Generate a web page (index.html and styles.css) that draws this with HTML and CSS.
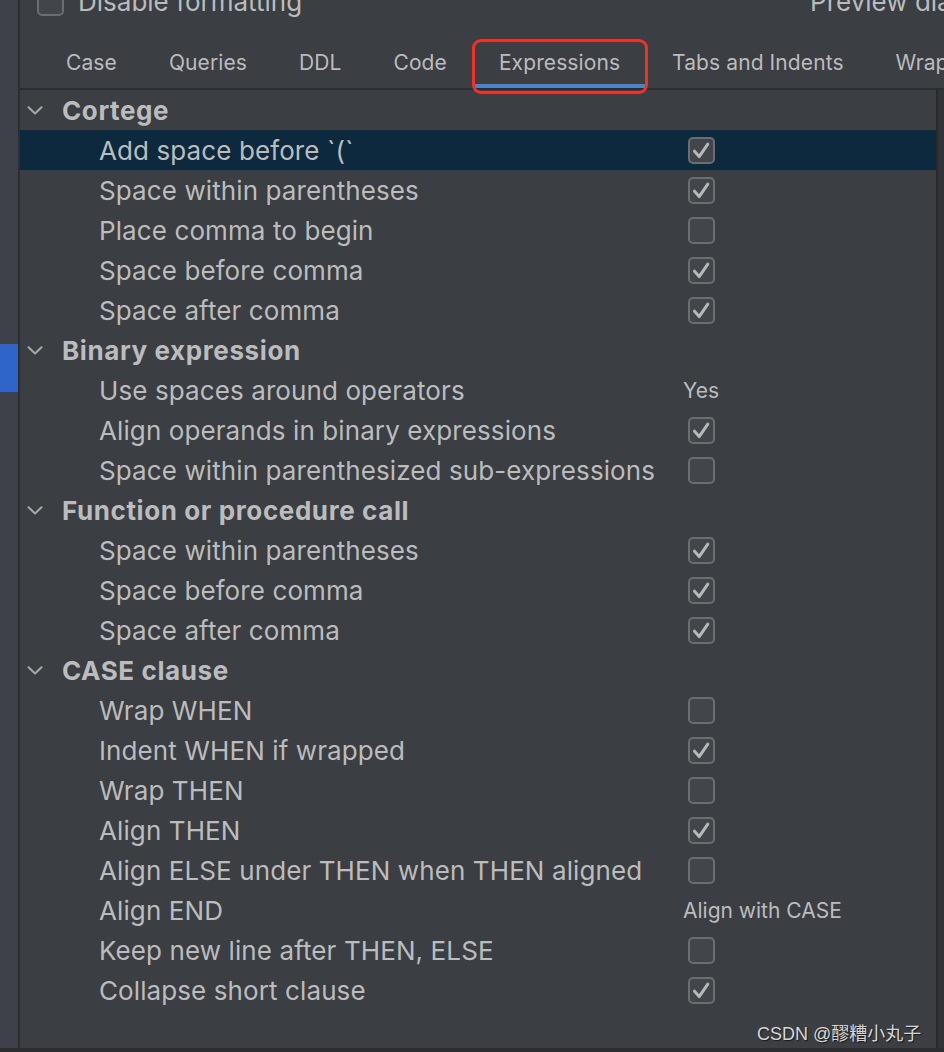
FILE: index.html
```html
<!DOCTYPE html>
<html lang="en">
<head>
<meta charset="utf-8">
<title>Code Style - Expressions</title>
<link rel="stylesheet" href="styles.css">
</head>
<body>
<div class="app">
  <aside class="sidebar"><div class="sidebar-mark"></div></aside>
  <main class="main">
    <div class="topbar">
      <span class="cb top-cb"></span>
      <span class="top-label">Disable formatting</span>
      <span class="top-right">Preview dialect:</span>
    </div>
    <nav class="tabs">
      <span class="tab">Case</span>
      <span class="tab">Queries</span>
      <span class="tab">DDL</span>
      <span class="tab">Code</span>
      <span class="tab active">Expressions<span class="annot"></span></span>
      <span class="tab">Tabs and Indents</span>
      <span class="tab">Wrapping and Braces</span>
    </nav>
    <div class="body">
      <div class="list">
        <div class="row header"><span class="chev"><svg viewBox="0 0 16 9" width="16" height="9"><path d="M1.5 1.2 L8 7.5 L14.5 1.2"/></svg></span><span class="hlabel">Cortege</span></div>
        <div class="row item selected"><span class="label">Add space before `(`</span><span class="val"><span class="cb on"><svg viewBox="0 0 27 27"><path d="M6.5 14.2 L11.2 19.6 L19.8 7.2"/></svg></span></span></div>
        <div class="row item"><span class="label">Space within parentheses</span><span class="val"><span class="cb on"><svg viewBox="0 0 27 27"><path d="M6.5 14.2 L11.2 19.6 L19.8 7.2"/></svg></span></span></div>
        <div class="row item"><span class="label">Place comma to begin</span><span class="val"><span class="cb"></span></span></div>
        <div class="row item"><span class="label">Space before comma</span><span class="val"><span class="cb on"><svg viewBox="0 0 27 27"><path d="M6.5 14.2 L11.2 19.6 L19.8 7.2"/></svg></span></span></div>
        <div class="row item"><span class="label">Space after comma</span><span class="val"><span class="cb on"><svg viewBox="0 0 27 27"><path d="M6.5 14.2 L11.2 19.6 L19.8 7.2"/></svg></span></span></div>

        <div class="row header"><span class="chev"><svg viewBox="0 0 16 9" width="16" height="9"><path d="M1.5 1.2 L8 7.5 L14.5 1.2"/></svg></span><span class="hlabel">Binary expression</span></div>
        <div class="row item"><span class="label">Use spaces around operators</span><span class="val"><span class="txt">Yes</span></span></div>
        <div class="row item"><span class="label">Align operands in binary expressions</span><span class="val"><span class="cb on"><svg viewBox="0 0 27 27"><path d="M6.5 14.2 L11.2 19.6 L19.8 7.2"/></svg></span></span></div>
        <div class="row item"><span class="label">Space within parenthesized sub-expressions</span><span class="val"><span class="cb"></span></span></div>

        <div class="row header"><span class="chev"><svg viewBox="0 0 16 9" width="16" height="9"><path d="M1.5 1.2 L8 7.5 L14.5 1.2"/></svg></span><span class="hlabel">Function or procedure call</span></div>
        <div class="row item"><span class="label">Space within parentheses</span><span class="val"><span class="cb on"><svg viewBox="0 0 27 27"><path d="M6.5 14.2 L11.2 19.6 L19.8 7.2"/></svg></span></span></div>
        <div class="row item"><span class="label">Space before comma</span><span class="val"><span class="cb on"><svg viewBox="0 0 27 27"><path d="M6.5 14.2 L11.2 19.6 L19.8 7.2"/></svg></span></span></div>
        <div class="row item"><span class="label">Space after comma</span><span class="val"><span class="cb on"><svg viewBox="0 0 27 27"><path d="M6.5 14.2 L11.2 19.6 L19.8 7.2"/></svg></span></span></div>

        <div class="row header"><span class="chev"><svg viewBox="0 0 16 9" width="16" height="9"><path d="M1.5 1.2 L8 7.5 L14.5 1.2"/></svg></span><span class="hlabel">CASE clause</span></div>
        <div class="row item"><span class="label">Wrap WHEN</span><span class="val"><span class="cb"></span></span></div>
        <div class="row item"><span class="label">Indent WHEN if wrapped</span><span class="val"><span class="cb on"><svg viewBox="0 0 27 27"><path d="M6.5 14.2 L11.2 19.6 L19.8 7.2"/></svg></span></span></div>
        <div class="row item"><span class="label">Wrap THEN</span><span class="val"><span class="cb"></span></span></div>
        <div class="row item"><span class="label">Align THEN</span><span class="val"><span class="cb on"><svg viewBox="0 0 27 27"><path d="M6.5 14.2 L11.2 19.6 L19.8 7.2"/></svg></span></span></div>
        <div class="row item"><span class="label">Align ELSE under THEN when THEN aligned</span><span class="val"><span class="cb"></span></span></div>
        <div class="row item"><span class="label">Align END</span><span class="val"><span class="txt">Align with CASE</span></span></div>
        <div class="row item"><span class="label">Keep new line after THEN, ELSE</span><span class="val"><span class="cb"></span></span></div>
        <div class="row item"><span class="label">Collapse short clause</span><span class="val"><span class="cb on"><svg viewBox="0 0 27 27"><path d="M6.5 14.2 L11.2 19.6 L19.8 7.2"/></svg></span></span></div>
      </div>
      <div class="gutter"></div>
    </div>
  </main>
</div>
<div class="watermark">CSDN @醪糟小丸子</div>
</body>
</html>
```

FILE: styles.css
```css
* { box-sizing: border-box; }

html, body {
  margin: 0;
  padding: 0;
}

body {
  width: 944px;
  height: 1052px;
  overflow: hidden;
  background: #2b2d30;
  font-family: Inter, "Liberation Sans", sans-serif;
  color: #bbbcbd;
  position: relative;
}

.app {
  display: flex;
  height: 1048px;
  overflow: hidden;
}

.sidebar {
  width: 20px;
  flex: none;
  background: #3e4149;
  border-right: 2px solid #2b2d30;
}

.sidebar-mark {
  margin-top: 344px;
  height: 48px;
  background: #2f64c8;
}

.main {
  flex: 1;
  display: flex;
  flex-direction: column;
  background: #3b3e42;
  min-width: 0;
  overflow: hidden;
}

.topbar {
  height: 40px;
  margin-top: -18px;
  flex: none;
  display: flex;
  align-items: center;
  padding-left: 17px;
  white-space: nowrap;
}

.top-cb {
  flex: none;
}

.top-label {
  margin-left: 14px;
  font-size: 26px;
  line-height: 40px;
}

.top-right {
  margin-left: auto;
  margin-right: -60px;
  font-size: 26px;
  line-height: 40px;
}

.tabs {
  flex: none;
  height: 68px;
  display: flex;
  align-items: flex-end;
  padding-left: 20px;
  border-bottom: 2px solid #2b2d30;
  white-space: nowrap;
}

.tab {
  position: relative;
  display: flex;
  align-items: center;
  padding: 0 26px;
  height: 48px;
  font-size: 21px;
  letter-spacing: 0.1px;
  border-bottom: 4px solid transparent;
  flex: none;
}

.tab.active {
  border-bottom-color: #4a84c6;
}

.annot {
  position: absolute;
  left: -1px;
  right: -2px;
  top: -1px;
  bottom: -10px;
  border: 3px solid #f0312a;
  border-radius: 9px;
}

.body {
  flex: 1;
  display: flex;
  min-height: 0;
}

.list {
  flex: 1;
}

.gutter {
  width: 8px;
  flex: none;
  background: #313336;
  border-left: 2px solid #27292b;
}

.row {
  height: 40px;
  display: flex;
  align-items: center;
  white-space: nowrap;
}

.row.selected {
  background: #0d293e;
}

.header {
  font-size: 26px;
  font-weight: 700;
  letter-spacing: 0.6px;
}

.chev {
  width: 16px;
  height: 9px;
  margin-left: 7px;
  margin-right: 19px;
  display: flex;
}

.chev svg path {
  fill: none;
  stroke: #a7a9ab;
  stroke-width: 2;
  stroke-linecap: round;
  stroke-linejoin: round;
}

.item .label {
  width: 663px;
  padding-left: 79px;
  font-size: 26px;
  letter-spacing: 0.1px;
  flex: none;
}

.val {
  display: flex;
  align-items: center;
}

.val .cb {
  margin-left: 5px;
}

.txt {
  font-size: 21px;
}

.cb {
  width: 27px;
  height: 27px;
  border: 2px solid #6a6d71;
  border-radius: 5px;
  background: #42464a;
  display: block;
  position: relative;
}

.cb svg {
  position: absolute;
  left: -2px;
  top: -2px;
  width: 27px;
  height: 27px;
}

.cb svg path {
  fill: none;
  stroke: #b7b8b9;
  stroke-width: 3;
  stroke-linecap: round;
  stroke-linejoin: round;
}

.watermark {
  position: absolute;
  left: 757px;
  top: 1019px;
  font-family: "Liberation Sans", "Noto Sans CJK SC", sans-serif;
  font-size: 18px;
  color: #d6d6d6;
  text-shadow: 1px 1px 1px rgba(0, 0, 0, 0.6);
  white-space: nowrap;
}
```
